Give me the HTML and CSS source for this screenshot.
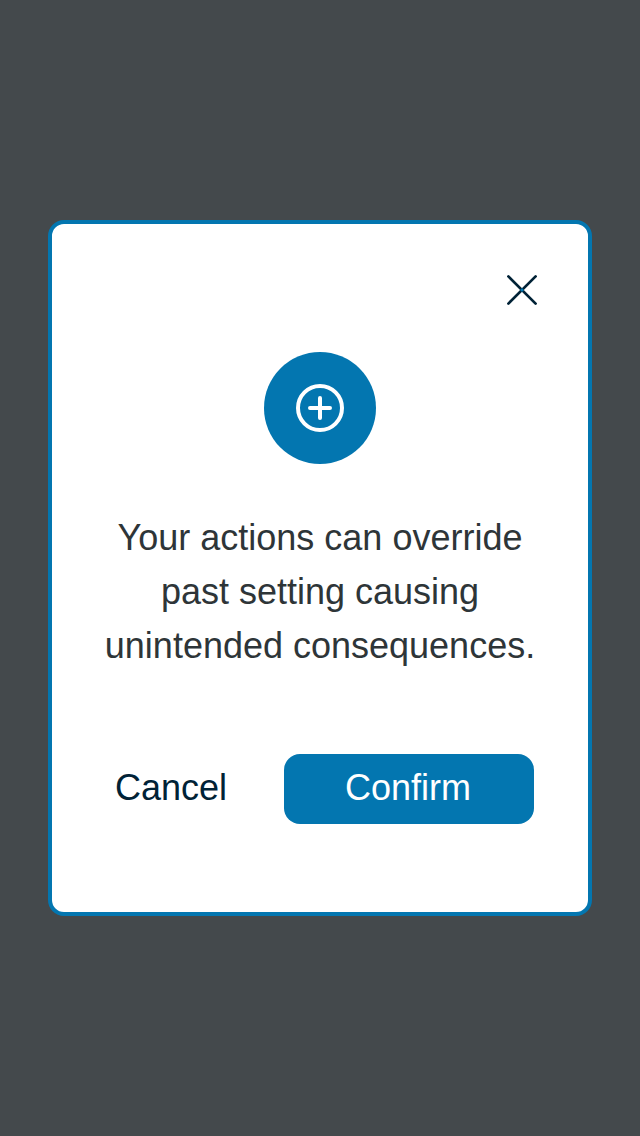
FILE: index.html
```html
<!DOCTYPE html>
<html lang="en">
<head>
<meta charset="utf-8">
<title>Confirm action</title>
<link rel="stylesheet" href="styles.css">
</head>
<body>
<main class="overlay">
  <section class="dialog" role="dialog" aria-modal="true" aria-labelledby="message">
    <button class="close" aria-label="Close">
      <svg width="32" height="32" viewBox="0 0 32 32" fill="none" stroke="#002236" stroke-width="2.7" stroke-linecap="round"><path d="M2.4 2.4 29.6 29.6M29.6 2.4 2.4 29.6"/><path d="M16 14 18 16 16 18 14 16Z" fill="#0376b0" stroke="none"/></svg>
    </button>
    <div class="badge">
      <svg width="48" height="48" viewBox="0 0 48 48" fill="none" stroke="#fff" stroke-width="4" stroke-linecap="round"><circle cx="24" cy="24" r="22"/><path d="M24 14v20M14 24h20"/></svg>
    </div>
    <p class="message" id="message">Your actions can override<br>past setting causing<br>unintended consequences.</p>
    <div class="actions">
      <button class="button cancel">Cancel</button>
      <button class="button confirm">Confirm</button>
    </div>
  </section>
</main>
</body>
</html>
```

FILE: styles.css
```css
* {
  box-sizing: border-box;
}

body {
  margin: 0;
  font-family: "Liberation Sans", Arial, sans-serif;
}

button {
  border: 0;
  padding: 0;
  background: none;
  font: inherit;
}

.overlay {
  min-height: 100vh;
  display: flex;
  align-items: center;
  justify-content: center;
  background: #44494c;
}

.dialog {
  width: 544px;
  height: 696px;
  padding: 50px 50px 0 48px;
  display: flex;
  flex-direction: column;
  align-items: center;
  border: 4px solid #0376b0;
  border-radius: 16px;
  background: #fff;
}

.close {
  width: 32px;
  height: 32px;
  align-self: flex-end;
}

.close svg,
.badge svg {
  display: block;
}

.badge {
  width: 112px;
  height: 112px;
  margin: 46px 0 0 2px;
  display: flex;
  align-items: center;
  justify-content: center;
  border-radius: 50%;
  background: #0376b0;
}

.message {
  margin: 47px 0 0 2px;
  font-size: 36px;
  line-height: 54px;
  text-align: center;
  white-space: nowrap;
  color: #2e3538;
}

.actions {
  width: 434px;
  margin-top: 81px;
  display: flex;
  gap: 16px;
  align-self: flex-start;
}

.button {
  height: 70px;
  padding-bottom: 2px;
  font-size: 36px;
  border-radius: 16px;
}

.cancel {
  width: 168px;
  padding-right: 26px;
  color: #002236;
}

.confirm {
  width: 250px;
  padding-right: 2px;
  background: #0376b0;
  color: #fff;
}
```
